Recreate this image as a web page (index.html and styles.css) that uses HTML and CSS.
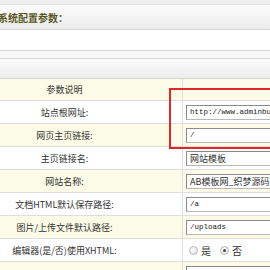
FILE: index.html
```html
<!DOCTYPE html>
<html lang="zh-CN">
<head>
    <meta charset="UTF-8">
    <title>系统配置参数</title>
    <link rel="stylesheet" href="styles.css">
</head>
<body>

    <!-- Title bars -->
    <div class="top-strip"></div>
    <div class="title-bar"><span class="title">系统配置参数：</span></div>
    <div class="blank"></div>
    <div class="sub-strip"></div>
    <div class="tab-bar"></div>

    <!-- Config table -->
    <div class="config">
        <div class="row head">
            <div class="label">参数说明</div>
            <div class="value"></div>
        </div>
        <div class="row">
            <div class="label">站点根网址:</div>
            <div class="value"><span class="field mono">http://www.adminbuy.cn</span></div>
        </div>
        <div class="row alt">
            <div class="label">网页主页链接:</div>
            <div class="value"><span class="field mono">/</span></div>
        </div>
        <div class="row">
            <div class="label">主页链接名:</div>
            <div class="value"><span class="field">网站模板</span></div>
        </div>
        <div class="row alt">
            <div class="label">网站名称:</div>
            <div class="value"><span class="field">AB模板网_织梦源码分享</span></div>
        </div>
        <div class="row">
            <div class="label">文档HTML默认保存路径:</div>
            <div class="value"><span class="field mono">/a</span></div>
        </div>
        <div class="row alt">
            <div class="label">图片/上传文件默认路径:</div>
            <div class="value"><span class="field mono">/uploads</span></div>
        </div>
        <div class="row">
            <div class="label">编辑器(是/否)使用XHTML:</div>
            <div class="value">
                <span class="radio"></span><span class="opt">是</span>
                <span class="radio checked"></span><span class="opt">否</span>
            </div>
        </div>
        <div class="row alt">
            <div class="label"></div>
            <div class="value"><span class="field mono"></span></div>
        </div>

        <!-- annotation box -->
        <div class="highlight"></div>
    </div>

</body>
</html>
```

FILE: styles.css
```css
/* Global */
body {
    margin: 0;
    width: 270px;
    height: 270px;
    overflow: hidden;
    background: #fff;
    font-family: "Noto Sans CJK SC", "Noto Sans", sans-serif;
    font-size: 9px;
    color: #333;
}

/* Title bars */
.top-strip {
    height: 4px;
    background: #efefef;
}

.title-bar {
    height: 24px;
    display: flex;
    align-items: center;
    background: linear-gradient(#fdfdfd, #ebebeb);
    border-top: 1px solid #e2e2e2;
    border-bottom: 1px solid #d6d6d6;
}

.title {
    margin-left: -2px;
    font-size: 10px;
    font-weight: bold;
    color: #55551c;
}

.blank {
    height: 20px;
    background: #fff;
    border-bottom: 1px solid #d8d8d8;
}

.sub-strip {
    height: 7px;
    background: #f8f8f8;
    border-bottom: 1px solid #d8d8d8;
}

.tab-bar {
    height: 19px;
    background: linear-gradient(#fcfcfc, #ececec);
    border-bottom: 1px solid #d6d6d6;
}

/* Config table */
.config {
    position: relative;
    margin-left: -53px;
    width: 400px;
}

.row {
    display: grid;
    grid-template-columns: 236px 1fr;
    height: 22px;
    border-bottom: 1px solid #dedede;
    background: #fff;
}

.row.head {
    height: 21px;
}

.row.head,
.row.alt {
    background: #fbfbe7;
}

.label {
    display: flex;
    align-items: center;
    justify-content: center;
    border-right: 1px solid #dedede;
    white-space: nowrap;
}

.value {
    display: flex;
    align-items: center;
    padding-left: 3px;
}

.field {
    display: flex;
    align-items: center;
    box-sizing: border-box;
    width: 220px;
    height: 15px;
    padding-left: 3px;
    background: #fff;
    border: 1px solid #b8b8b8;
    border-top-color: #8c8c8c;
    border-left-color: #8c8c8c;
    white-space: nowrap;
}

.mono {
    font-family: "Liberation Mono", monospace;
    font-size: 7.5px;
    color: #222;
}

/* Radio options */
.radio {
    width: 7px;
    height: 7px;
    margin-left: 3px;
    border-radius: 50%;
    border: 1px solid #b5b5b5;
    background: radial-gradient(circle at 40% 35%, #fff, #dcdcdc);
    position: relative;
}

.radio.checked::after {
    content: "";
    position: absolute;
    left: 2px;
    top: 2px;
    width: 3px;
    height: 3px;
    border-radius: 50%;
    background: #444;
}

.opt {
    margin-left: 3px;
    margin-right: 6px;
    font-size: 10px;
}

/* Red annotation */
.highlight {
    position: absolute;
    left: 222px;
    top: 9px;
    width: 200px;
    height: 57px;
    border: 2px solid #e0282a;
}
```
